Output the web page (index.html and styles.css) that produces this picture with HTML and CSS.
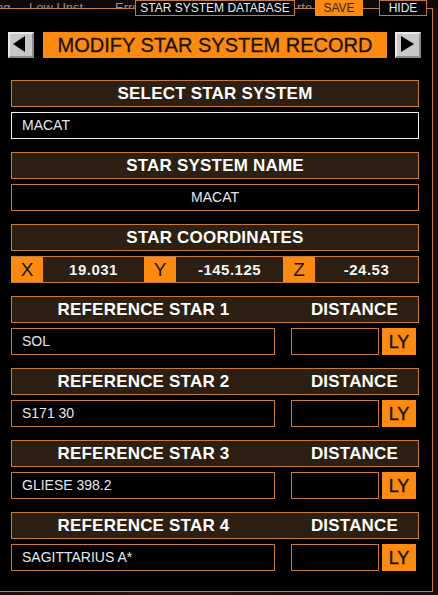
FILE: index.html
```
<!DOCTYPE html>
<html lang="en">
<head>
  <meta charset="UTF-8" />
  <meta name="viewport" content="width=device-width, initial-scale=1.0"/>
  <title>Modify Star System Record</title>
  <link rel="stylesheet" href="styles.css">
</head>
<body>

  <div class="backdrop">
    <span class="w1">ng</span>
    <span class="w2">Low Unst</span>
    <span class="w3">Erro</span>
    <span class="w4">rte</span>
  </div>

  <div class="panel">
    <div class="tabs">
      <div class="tab db">STAR SYSTEM DATABASE</div>
      <div class="tab save">SAVE</div>
      <div class="tab hide">HIDE</div>
    </div>

    <div class="nav">
      <button class="arrow">
        <svg width="22" height="22" viewBox="0 0 22 22"><polygon points="3,10 15,2 15,18" fill="#000"/></svg>
      </button>
      <div class="title">MODIFY STAR SYSTEM RECORD</div>
      <button class="arrow">
        <svg width="22" height="22" viewBox="0 0 22 22"><polygon points="4,2 17,10 4,18" fill="#000"/></svg>
      </button>
    </div>

    <div class="group first">
      <div class="head">SELECT STAR SYSTEM</div>
      <div class="field select">MACAT</div>
    </div>

    <div class="group">
      <div class="head">STAR SYSTEM NAME</div>
      <div class="field center">MACAT</div>
    </div>

    <div class="group">
      <div class="head">STAR COORDINATES</div>
      <div class="coords">
        <div class="axis">X</div>
        <div class="val">19.031</div>
        <div class="axis">Y</div>
        <div class="val">-145.125</div>
        <div class="axis">Z</div>
        <div class="val">-24.53</div>
      </div>
    </div>

    <div class="group">
      <div class="head ref"><span>REFERENCE STAR 1</span><span class="dist">DISTANCE</span></div>
      <div class="refrow">
        <div class="field">SOL</div>
        <div class="field"></div>
        <div class="ly">LY</div>
      </div>
    </div>

    <div class="group">
      <div class="head ref"><span>REFERENCE STAR 2</span><span class="dist">DISTANCE</span></div>
      <div class="refrow">
        <div class="field">S171 30</div>
        <div class="field"></div>
        <div class="ly">LY</div>
      </div>
    </div>

    <div class="group">
      <div class="head ref"><span>REFERENCE STAR 3</span><span class="dist">DISTANCE</span></div>
      <div class="refrow">
        <div class="field">GLIESE 398.2</div>
        <div class="field"></div>
        <div class="ly">LY</div>
      </div>
    </div>

    <div class="group">
      <div class="head ref"><span>REFERENCE STAR 4</span><span class="dist">DISTANCE</span></div>
      <div class="refrow">
        <div class="field">SAGITTARIUS A*</div>
        <div class="field"></div>
        <div class="ly">LY</div>
      </div>
    </div>
  </div>

</body>
</html>
```

FILE: styles.css
```
body {
  margin: 0;
  padding: 0;
  width: 438px;
  height: 595px;
  overflow: hidden;
  font-family: "Liberation Sans", Arial, sans-serif;
  background: linear-gradient(90deg, #1a0f0d 0%, #2b1612 40%, #1d1210 70%, #161010 100%);
  color: #fff;
}
.backdrop {
  height: 8px;
  overflow: hidden;
  display: flex;
  white-space: nowrap;
  font-size: 13px;
  line-height: 16px;
  color: #8e8e8e;
  background: #0e0a0a;
}
.w1 { width: 33px; margin-left: -4px; }
.w2 { width: 86px; }
.w3 { width: 182px; }
.panel {
  width: 433px;
  height: 584px;
  box-sizing: border-box;
  background: #000;
  border: 1px solid #c47a3c;
  border-left: none;
}
.tabs {
  display: flex;
  margin-top: -9px;
  height: 16px;
}
.tab {
  box-sizing: border-box;
  height: 16px;
  border: 1px solid #c47a3c;
  background: #000;
  color: #e9edf2;
  font-size: 12px;
  line-height: 14px;
  text-align: center;
}
.db {
  margin-left: 135px;
  width: 160px;
}
.save {
  margin-left: 20px;
  width: 48px;
  background: #fb8a12;
  border-color: #fb8a12;
  color: #3a2308;
}
.hide {
  margin-left: 16px;
  width: 48px;
}
.nav {
  display: flex;
  margin: 16px 0 0 8px;
  height: 26px;
}
.arrow {
  box-sizing: border-box;
  width: 26px;
  height: 26px;
  padding: 0;
  margin: 0;
  background: #c8c8c8;
  border: 2px solid;
  border-color: #e8e8e8 #8d8d8d #8d8d8d #e8e8e8;
  display: flex;
  align-items: center;
  justify-content: center;
}
.title {
  width: 344px;
  margin: 0 8px 0 9px;
  background: #fb8a12;
  color: #1c1206;
  font-size: 20px;
  line-height: 26px;
  text-align: center;
  -webkit-text-stroke: 0.3px #1c1206;
}
.group {
  width: 408px;
  margin: 13px 0 0 11px;
}
.group.first {
  margin-top: 22px;
}
.head {
  box-sizing: border-box;
  height: 27px;
  border: 1px solid #c47a3c;
  background: #2d1f11;
  font-weight: bold;
  font-size: 17px;
  line-height: 25px;
  text-align: center;
  letter-spacing: 0.2px;
}
.head.ref {
  display: grid;
  grid-template-columns: 263px 1fr;
}
.head.ref .dist {
  padding-left: 16px;
}
.field {
  box-sizing: border-box;
  height: 27px;
  margin-top: 5px;
  border: 1px solid #c47a3c;
  background: #000;
  color: #e4e8ee;
  font-size: 14px;
  line-height: 25px;
  padding-left: 10px;
}
.field.select {
  border-color: #f2f2f2;
}
.field.center {
  text-align: center;
  padding-left: 0;
}
.coords {
  box-sizing: border-box;
  height: 27px;
  margin-top: 5px;
  display: grid;
  grid-template-columns: 32px 101px 32px 107px 32px 1fr;
  border: 1px solid #c47a3c;
  border-left: none;
  background: #2d1f11;
}
.axis {
  background: #fb8a12;
  color: #1c1206;
  font-size: 19px;
  line-height: 25px;
  text-align: center;
}
.val {
  color: #f4f4f4;
  font-weight: bold;
  font-size: 15px;
  line-height: 25px;
  text-align: center;
  letter-spacing: 0.5px;
}
.refrow {
  display: grid;
  grid-template-columns: 264px 104px 37px;
  margin-top: 5px;
}
.refrow .field {
  margin-top: 0;
}
.refrow .field + .field {
  margin-left: 16px;
  width: 88px;
}
.ly {
  margin-left: 3px;
  height: 27px;
  background: #fb8a12;
  color: #1c1206;
  font-size: 18px;
  line-height: 28px;
  text-align: center;
  -webkit-text-stroke: 0.4px #1c1206;
}
```
